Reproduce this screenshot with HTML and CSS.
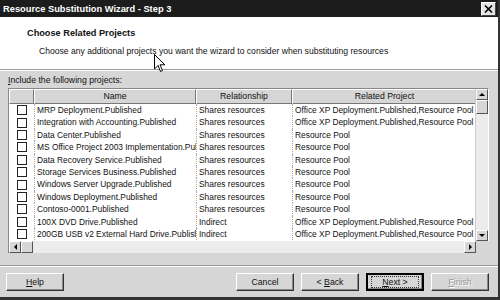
FILE: index.html
```html
<!DOCTYPE html>
<html lang="en">
<head>
    <meta charset="UTF-8">
    <title>Resource Substitution Wizard - Step 3</title>
    <link rel="stylesheet" href="styles.css">
</head>
<body>
    <div class="window">
        <div class="titlebar">
            <span class="title">Resource Substitution Wizard - Step 3</span>
            <span class="close-btn">
                <svg width="9" height="8" viewBox="0 0 9 8"><path d="M1 0.5 L8 7.5 M8 0.5 L1 7.5" stroke="#000" stroke-width="1.6"/></svg>
            </span>
        </div>

        <div class="header">
            <div class="header-title">Choose Related Projects</div>
            <div class="header-sub">Choose any additional projects you want the wizard to consider when substituting resources</div>
        </div>

        <div class="content">
            <div class="list-label"><u>I</u>nclude the following projects:</div>
            <div class="listbox">
                <div class="list-main">
                    <div class="grid">
                        <div class="hcell"></div>
                        <div class="hcell">Name</div>
                        <div class="hcell">Relationship</div>
                        <div class="hcell">Related Project</div>
                    </div>
                    <div class="rows" id="rows"></div>
                </div>
                <div class="vscroll">
                    <div class="sbtn"><span class="arrow-up"></span></div>
                    <div class="vthumb"></div>
                    <div class="vtrack"></div>
                    <div class="sbtn"><span class="arrow-down"></span></div>
                </div>
            </div>
            <div class="hscroll">
                <div class="sbtn"><span class="arrow-left"></span></div>
                <div class="hthumb"></div>
                <div class="htrack"></div>
                <div class="sbtn"><span class="arrow-right"></span></div>
                <div class="corner"></div>
            </div>
        </div>

        <div class="footer">
            <button class="btn"><u>H</u>elp</button>
            <div class="spacer"></div>
            <button class="btn">Cancel</button>
            <button class="btn">&lt; <u>B</u>ack</button>
            <button class="btn default"><span class="focus"><u>N</u>ext &gt;</span></button>
            <button class="btn disabled"><u>F</u>inish</button>
        </div>

        <svg class="cursor" width="12" height="19" viewBox="0 0 12 19">
            <path d="M0.5 0.5 L0.5 15 L4 11.5 L6.5 17.5 L8.5 16.5 L6 10.8 L10.8 10.8 Z" fill="#fff" stroke="#000" stroke-width="1"/>
        </svg>
    </div>

    <script>
        const projects = [
            ['MRP Deployment.Published', 'Shares resources', 'Office XP Deployment.Published,Resource Pool'],
            ['Integration with Accounting.Published', 'Shares resources', 'Office XP Deployment.Published,Resource Pool'],
            ['Data Center.Published', 'Shares resources', 'Resource Pool'],
            ['MS Office Project 2003 Implementation.Published', 'Shares resources', 'Resource Pool'],
            ['Data Recovery Service.Published', 'Shares resources', 'Resource Pool'],
            ['Storage Services Business.Published', 'Shares resources', 'Resource Pool'],
            ['Windows Server Upgrade.Published', 'Shares resources', 'Resource Pool'],
            ['Windows Deployment.Published', 'Shares resources', 'Resource Pool'],
            ['Contoso-0001.Published', 'Shares resources', 'Resource Pool'],
            ['100X DVD Drive.Published', 'Indirect', 'Office XP Deployment.Published,Resource Pool'],
            ['200GB USB v2 External Hard Drive.Published', 'Indirect', 'Office XP Deployment.Published,Resource Pool']
        ];

        const rows = document.getElementById('rows');
        projects.forEach(p => {
            const row = document.createElement('div');
            row.className = 'row';

            const check = document.createElement('div');
            check.className = 'cell check-cell';
            const box = document.createElement('span');
            box.className = 'checkbox';
            check.appendChild(box);
            row.appendChild(check);

            p.forEach(text => {
                const cell = document.createElement('div');
                cell.className = 'cell';
                cell.textContent = text;
                row.appendChild(cell);
            });
            rows.appendChild(row);
        });
    </script>
</body>
</html>
```

FILE: styles.css
```css
body {
    margin: 0;
    font-family: "Liberation Sans", Arial, sans-serif;
    font-size: 8.7px;
    color: #111;
}

.window {
    position: relative;
    width: 500px;
    height: 300px;
    box-sizing: border-box;
    background: #d6d6d6;
    border-right: 2px solid #333;
    border-bottom: 3px solid #333;
    display: flex;
    flex-direction: column;
    overflow: hidden;
}

.titlebar {
    height: 17px;
    background: #1c1c1c;
    display: flex;
    align-items: center;
    justify-content: space-between;
    padding: 0 2px 0 3px;
    flex-shrink: 0;
}

.title {
    color: #fff;
    font-weight: bold;
    font-size: 9.3px;
}

.close-btn {
    width: 13px;
    height: 12px;
    background: #e4e4e4;
    border: 1px solid;
    border-color: #fff #444 #444 #fff;
    display: flex;
    align-items: center;
    justify-content: center;
}

.header {
    height: 52px;
    background: #fff;
    border-bottom: 1px solid #999;
    box-shadow: 0 1px 0 #fff;
    flex-shrink: 0;
}

.header-title {
    font-weight: bold;
    font-size: 9.2px;
    padding: 11px 0 0 27px;
}

.header-sub {
    font-size: 8.6px;
    padding: 8px 0 0 39px;
}

.content {
    padding: 3px 0 0 8px;
    width: 481px;
}

.list-label {
    height: 15px;
    line-height: 15px;
}

.listbox {
    display: flex;
    height: 152px;
    border: 1px solid;
    border-color: #888 #fff #fff #888;
    border-bottom: none;
    background: #fff;
}

.list-main {
    flex: 1;
    overflow: hidden;
}

.grid,
.row {
    display: grid;
    grid-template-columns: 25px 162px 96px 185px;
}

.hcell {
    height: 15px;
    line-height: 13px;
    background: #d6d6d6;
    border: 1px solid;
    border-color: #fff #777 #777 #fff;
    text-align: center;
    overflow: hidden;
    box-sizing: border-box;
}

.row {
    height: 12.4px;
    font-size: 8.4px;
}

.cell {
    border-left: 1px dotted #aaa;
    padding-left: 2px;
    white-space: nowrap;
    overflow: hidden;
    line-height: 12.4px;
}

.check-cell {
    border-left: none;
    padding-left: 0;
    display: flex;
    align-items: center;
    justify-content: center;
}

.checkbox {
    width: 8px;
    height: 8px;
    border: 1px solid #222;
    background: #fff;
}

.vscroll {
    width: 12px;
    display: flex;
    flex-direction: column;
    background: #e8e8e8;
    border-left: 1px solid #ccc;
}

.sbtn {
    width: 12px;
    height: 11px;
    flex-shrink: 0;
    box-sizing: border-box;
    background: #d6d6d6;
    border: 1px solid;
    border-color: #fff #555 #555 #fff;
    display: flex;
    align-items: center;
    justify-content: center;
}

.vthumb {
    height: 14px;
    background: #d6d6d6;
    border: 1px solid;
    border-color: #fff #555 #555 #fff;
    box-sizing: border-box;
}

.vtrack,
.htrack {
    flex: 1;
    background: #ececec;
}

.arrow-up {
    border: 3px solid transparent;
    border-bottom: 3px solid #000;
    border-top: none;
}

.arrow-down {
    border: 3px solid transparent;
    border-top: 3px solid #000;
    border-bottom: none;
}

.arrow-left {
    border: 3px solid transparent;
    border-right: 3px solid #000;
    border-left: none;
}

.arrow-right {
    border: 3px solid transparent;
    border-left: 3px solid #000;
    border-right: none;
}

.hscroll {
    display: flex;
    height: 12px;
    border-left: 1px solid #888;
}

.hscroll .sbtn {
    height: 12px;
    width: 12px;
}

.hthumb {
    width: 12px;
    background: #d6d6d6;
    border: 1px solid;
    border-color: #fff #555 #555 #fff;
    box-sizing: border-box;
}

.corner {
    width: 13px;
    background: #d6d6d6;
}

.footer {
    margin-top: auto;
    border-top: 1px solid #999;
    box-shadow: inset 0 1px 0 #fff;
    display: flex;
    gap: 7px;
    padding: 7px 9px 6px 6px;
}

.spacer {
    flex: 1;
}

.btn {
    width: 58px;
    height: 18px;
    padding: 0;
    font-family: "Liberation Sans", Arial, sans-serif;
    font-size: 8.7px;
    color: #111;
    background: #d6d6d6;
    border: 1px solid;
    border-color: #fff #333 #333 #fff;
    box-shadow: inset -1px -1px 0 #888;
}

.btn.default {
    outline: 1px solid #000;
    outline-offset: -1px;
    border-width: 2px;
    border-color: #000;
}

.btn.default .focus {
    display: inline-block;
    border: 1px dotted #333;
    padding: 0 10px;
}

.btn.disabled {
    color: #999;
    text-shadow: 1px 1px 0 #fff;
}

.cursor {
    position: absolute;
    left: 154px;
    top: 54px;
}
```
